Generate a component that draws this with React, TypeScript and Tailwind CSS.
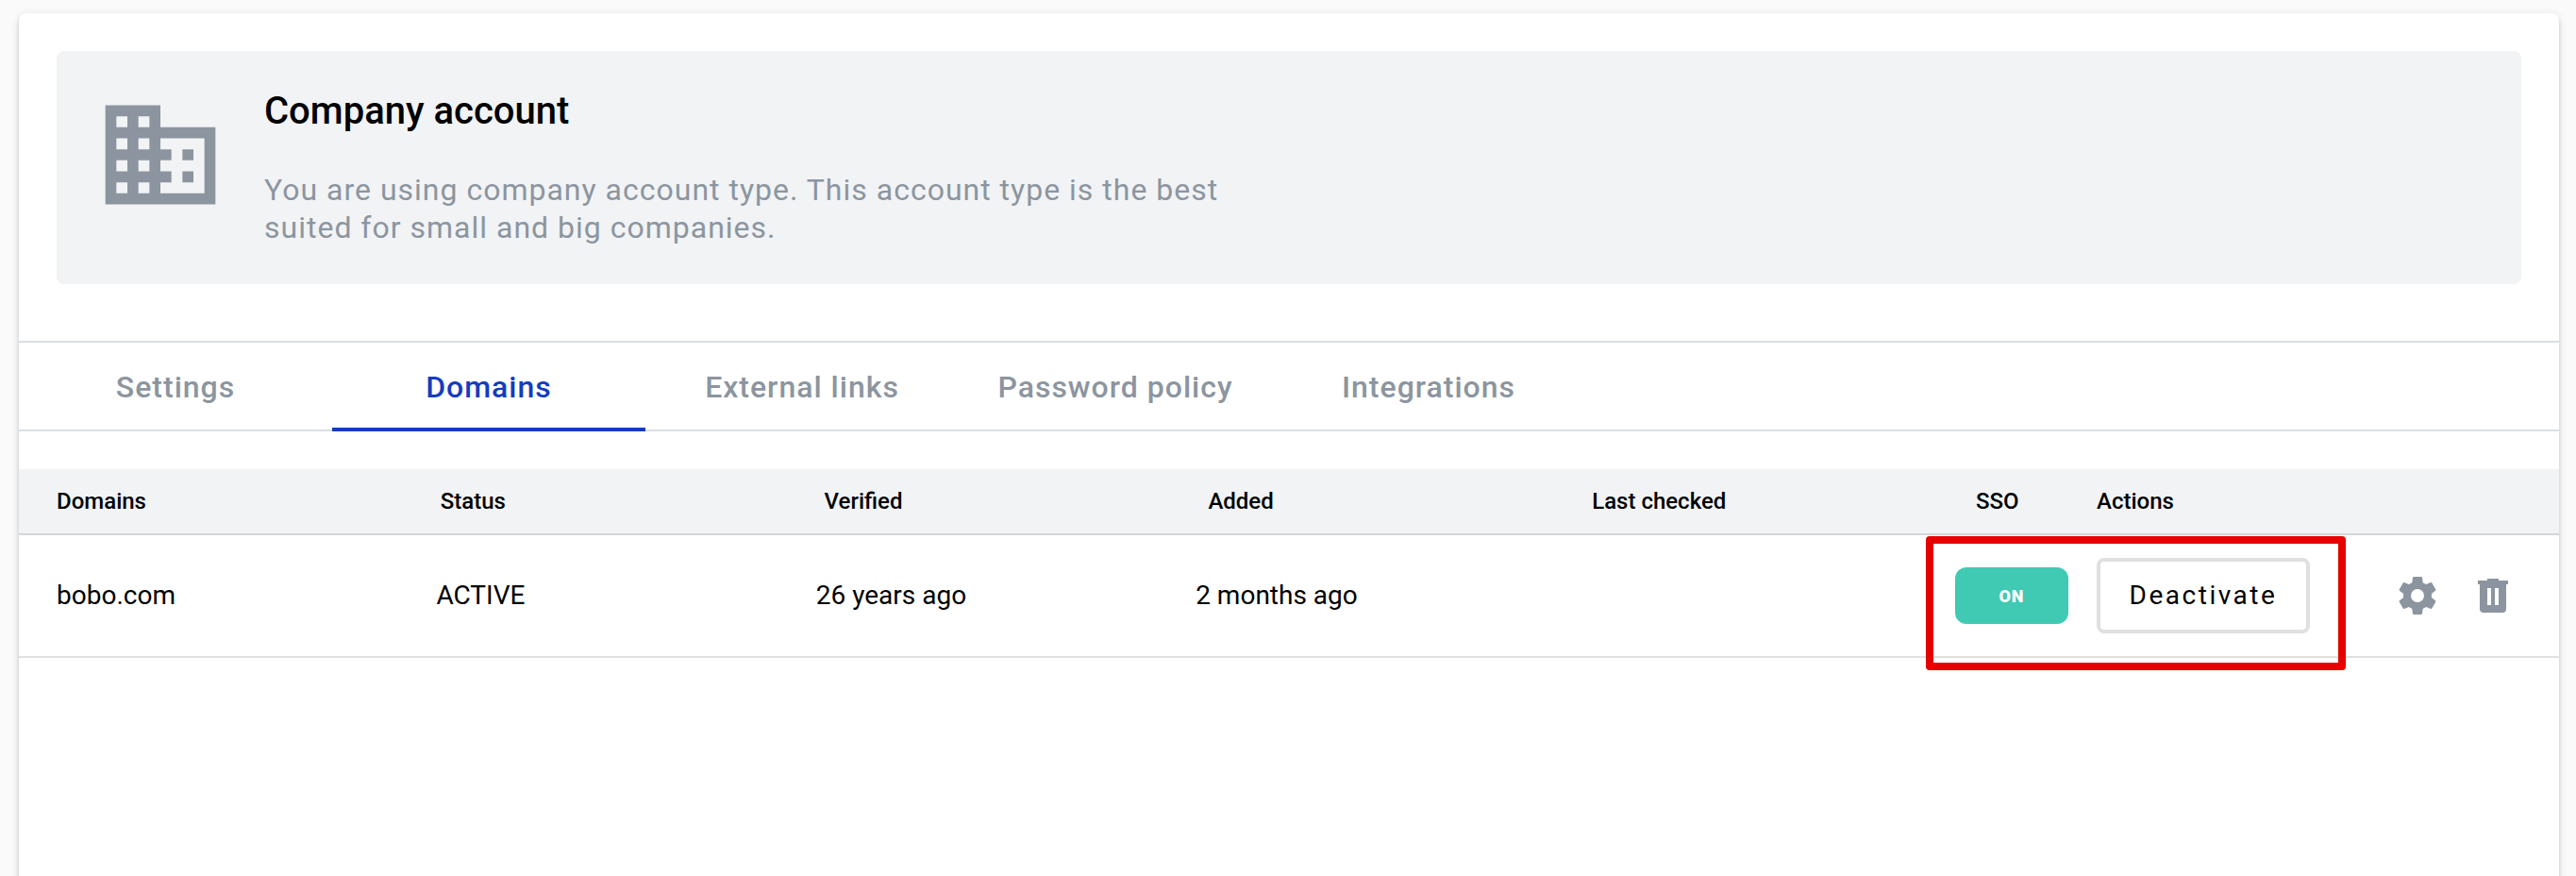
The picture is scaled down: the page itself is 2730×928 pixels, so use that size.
const tabs = ["Settings", "Domains", "External links", "Password policy", "Integrations"];
const columns = ["Domains", "Status", "Verified", "Added", "Last checked"];
const cells = ["bobo.com", "ACTIVE", "26 years ago", "2 months ago", ""];

function BuildingIcon() {
  return (
    <svg viewBox="0 0 24 24" className="size-[140px] shrink-0 fill-[#8c959f]">
      <path d="M12 7V3H2v18h20V7H12zM6 19H4v-2h2v2zm0-4H4v-2h2v2zm0-4H4V9h2v2zm0-4H4V5h2v2zm4 12H8v-2h2v2zm0-4H8v-2h2v2zm0-4H8V9h2v2zm0-4H8V5h2v2zm10 12h-8v-2h2v-2h-2v-2h2v-2h-2V9h8v10zm-2-8h-2v2h2v-2zm0 4h-2v2h2v-2z" />
    </svg>
  );
}

function CogIcon() {
  return (
    <svg viewBox="0 0 24 24" className="size-12 fill-[#8c959f]">
      <path d="M12,15.5A3.5,3.5 0 0,1 8.5,12A3.5,3.5 0 0,1 12,8.5A3.5,3.5 0 0,1 15.5,12A3.5,3.5 0 0,1 12,15.5M19.43,12.97C19.47,12.65 19.5,12.33 19.5,12C19.5,11.67 19.47,11.34 19.43,11L21.54,9.37C21.73,9.22 21.78,8.95 21.66,8.73L19.66,5.27C19.54,5.05 19.27,4.96 19.05,5.05L16.56,6.05C16.04,5.66 15.5,5.32 14.87,5.07L14.5,2.42C14.46,2.18 14.25,2 14,2H10C9.75,2 9.54,2.18 9.5,2.42L9.13,5.07C8.5,5.32 7.96,5.66 7.44,6.05L4.95,5.05C4.73,4.96 4.46,5.05 4.34,5.27L2.34,8.73C2.21,8.95 2.27,9.22 2.46,9.37L4.57,11C4.53,11.34 4.5,11.67 4.5,12C4.5,12.33 4.53,12.65 4.57,12.97L2.46,14.63C2.27,14.78 2.21,15.05 2.34,15.27L4.34,18.73C4.46,18.95 4.73,19.03 4.95,18.95L7.44,17.94C7.96,18.34 8.5,18.68 9.13,18.93L9.5,21.58C9.54,21.82 9.75,22 10,22H14C14.25,22 14.46,21.82 14.5,21.58L14.87,18.93C15.5,18.67 16.04,18.34 16.56,17.94L19.05,18.95C19.27,19.03 19.54,18.95 19.66,18.73L21.66,15.27C21.78,15.05 21.73,14.78 21.54,14.63L19.43,12.97Z" />
    </svg>
  );
}

function TrashIcon() {
  return (
    <svg viewBox="0 0 24 24" className="size-12 fill-[#8c959f]">
      <path d="M9,3V4H4V6H5V19A2,2 0 0,0 7,21H17A2,2 0 0,0 19,19V6H20V4H15V3H9M9,8H11V17H9V8M13,8H15V17H13V8Z" />
    </svg>
  );
}

export default function App() {
  return (
    <div className="h-[928px] overflow-hidden bg-[#fafafa] pt-[14px] pr-[18px] pl-5 font-['Roboto',sans-serif] text-black">
      <main className="h-[960px] rounded-lg bg-white shadow-[0_6px_2px_-4px_rgba(0,0,0,0.2),0_4px_4px_0_rgba(0,0,0,0.14),0_2px_10px_0_rgba(0,0,0,0.12)]">
        <div className="px-10 pt-10">
          <section className="flex h-[247px] gap-10 rounded-lg bg-[#f1f3f5] p-10">
            <BuildingIcon />
            <div>
              <h1 className="pt-px text-[40px] leading-[46px] font-medium">Company account</h1>
              <p className="mt-10 w-[1040px] text-[32px] leading-10 tracking-[1px] text-[#8c959f]">
                You are using company account type. This account type is the best suited for small and big companies.
              </p>
            </div>
          </section>
        </div>

        <nav className="mt-[60px] flex h-24 border-y-2 border-[#d9dee2]">
          {tabs.map((tab) => (
            <button
              key={tab}
              className={
                tab === "Domains"
                  ? "-mb-[2px] w-[332px] border-b-4 border-[#143cc0] pt-1 text-center text-[32px] font-medium tracking-[1px] text-[#143cc0]"
                  : "-mb-[2px] w-[332px] border-b-4 border-transparent pt-1 text-center text-[32px] font-medium tracking-[1px] text-[#8c959f]"
              }
            >
              {tab}
            </button>
          ))}
        </nav>

        <section className="mt-10">
          <div className="flex h-[70px] items-center border-b-2 border-[#d4d6d7] bg-[#f1f3f5] pl-10 text-[24px] font-medium">
            {columns.map((column) => (
              <div key={column} className="w-[406.8px]">{column}</div>
            ))}
            <div className="w-32">SSO</div>
            <div>Actions</div>
          </div>
          <div className="relative flex h-[130px] items-center border-b-2 border-[#e0e0e0] pl-10 text-[28px]">
            {cells.map((cell, i) => (
              <div key={i} className="w-[402.4px]">{cell}</div>
            ))}
            <div className="flex h-[60px] w-[120px] items-center justify-center rounded-xl bg-[#40c9b3] text-[18px] font-black tracking-[1px] text-white">
              ON
            </div>
            <button className="ml-[30px] h-20 w-[226px] rounded-lg border-4 border-[#e0e0e0] text-[28px] font-normal tracking-[2.5px]">
              Deactivate
            </button>
            <button className="ml-[90px]"><CogIcon /></button>
            <button className="ml-8"><TrashIcon /></button>
            <div className="absolute top-px left-[2021px] h-[142px] w-[445px] rounded border-8 border-[#e60000]" />
          </div>
        </section>
      </main>
    </div>
  );
}
